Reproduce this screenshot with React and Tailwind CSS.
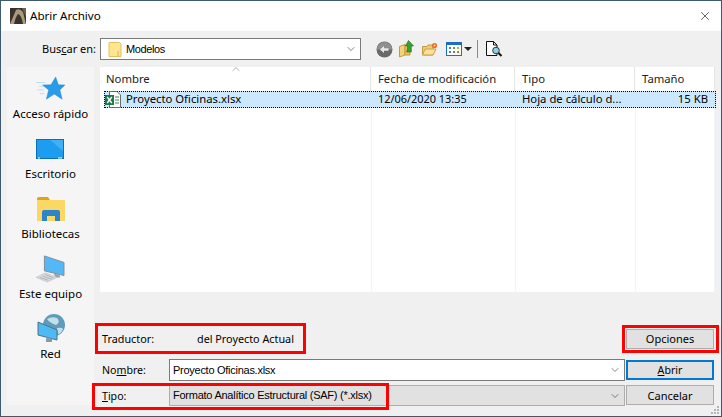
import React from "react";
import { X, ChevronDown, ChevronUp } from "lucide-react";

const FONT = { fontFamily: '"Noto Sans", "Open Sans", sans-serif' };
const COMBO_FONT = { fontFamily: '"Liberation Sans", Arial, sans-serif' };

function AppIcon() {
  return (
    <svg width="16" height="16" viewBox="0 0 16 16">
      <rect width="16" height="16" fill="#3a3128" />
      <path d="M0 16 L6 2 Q10 0 13 4 L16 16 L13 16 Q11 6 8 6 Q6 8 4 16Z" fill="#a89a80" />
      <path d="M12 0H16V9Z" fill="#6d6250" />
    </svg>
  );
}

function SmallFolder() {
  return (
    <svg width="14" height="17" viewBox="0 0 14 17">
      <path d="M1 1.5H11.5L13 3V15.5H1Z" fill="#fde68f" stroke="#e5c05c" />
      <path d="M10 10V15" stroke="#e0b64a" />
    </svg>
  );
}

function BackIcon() {
  return (
    <svg width="17" height="17" viewBox="0 0 17 17">
      <circle cx="8.5" cy="8.5" r="8" fill="#6a6a6a" />
      <path d="M1 8.5A7.5 7.5 0 0 1 16 8.5Z" fill="#8f8f8f" />
      <path d="M4 8.5L8 5V7.3H12.5V9.7H8V12Z" fill="#e8e8e8" />
    </svg>
  );
}

function UpFolderIcon() {
  return (
    <svg width="15" height="18" viewBox="0 0 15 18">
      <path d="M0.5 6.5L6 4.5V15L0.5 17Z" fill="#f3d27a" stroke="#c39a3d" />
      <path d="M6 5H11V15L6 15Z" fill="#e9c264" stroke="#c39a3d" />
      <path d="M9.5 0.5L14.5 6H12.3V12H7.7C8.3 9.8 8.7 8 8.7 6H6.5Z" fill="#36a12f" stroke="#17691a" strokeWidth="0.6" />
    </svg>
  );
}

function NewFolderIcon() {
  return (
    <svg width="16" height="14" viewBox="0 0 16 14">
      <path d="M0.5 4.5H5L6 3H11V13H0.5Z" fill="#eecb74" stroke="#c39a3d" />
      <path d="M3 7H14L11 13H0.5Z" fill="#f8e09a" stroke="#c9a24a" />
      <circle cx="12.5" cy="3.5" r="2.6" fill="#ef6a2c" />
      <circle cx="12.5" cy="3.5" r="1" fill="#ffd9a8" />
    </svg>
  );
}

function ViewsIcon() {
  return (
    <svg width="16" height="14" viewBox="0 0 16 14">
      <rect x="0.5" y="0.5" width="15" height="13" fill="#fff" stroke="#1a6fc4" />
      <rect x="0" y="0" width="16" height="3" fill="#1a6fc4" />
      <rect x="3" y="5" width="2" height="2" fill="#3d7fd0" />
      <rect x="7" y="5" width="2" height="2" fill="#5aa846" />
      <rect x="11" y="5" width="2" height="2" fill="#e0a030" />
      <rect x="3" y="9" width="2" height="2" fill="#3d7fd0" />
      <rect x="7" y="9" width="2" height="2" fill="#d0603a" />
      <rect x="11" y="9" width="2" height="2" fill="#5aa846" />
    </svg>
  );
}

function PreviewIcon() {
  return (
    <svg width="17" height="16" viewBox="0 0 17 16">
      <path d="M0.5 0.5H7.5L11 4V14.5H0.5Z" fill="#fff" stroke="#111" />
      <path d="M7.5 0.5V4H11" fill="none" stroke="#111" />
      <circle cx="10" cy="9.5" r="3.3" fill="#8fd0e8" stroke="#333" />
      <path d="M12.5 12L15.5 15" stroke="#111" strokeWidth="2" />
    </svg>
  );
}

function StarIcon() {
  return (
    <svg width="30" height="26" viewBox="0 0 32 28">
      <path d="M0 7H10M3 11H9M1 15H8M4 19H9" stroke="#b5dcf7" strokeWidth="1" />
      <path d="M21 1L24 9.5L31 9.7L25.6 15L28 25L19.5 19.5L11 25L13.5 15L7 9.7L16 9.5Z" fill="#2a9be8" stroke="#1f88d6" strokeWidth="0.5" />
    </svg>
  );
}

function DesktopIcon() {
  return (
    <svg width="28" height="20" viewBox="0 0 28 20">
      <rect x="0.5" y="0.5" width="27" height="19" fill="#1e9cf0" stroke="#0b6fb8" />
      <path d="M14 1H27V12Z" fill="#3db0f7" />
      <path d="M2 19H4M22 19H26" stroke="#fff" strokeWidth="1" />
    </svg>
  );
}

function LibrariesIcon() {
  return (
    <svg width="28" height="24" viewBox="0 0 28 24">
      <path d="M0 2Q0 0 2 0H11L13 3H0Z" fill="#dfa21e" />
      <rect x="0" y="3" width="28" height="21" fill="#fbd765" />
      <path d="M5 24V15Q5 13 7 13H21Q23 13 23 15V24H18V19H10V24Z" fill="#2a86c9" />
    </svg>
  );
}

function ComputerIcon() {
  return (
    <svg width="32" height="28" viewBox="0 0 32 30">
      <path d="M10 1L31 8V22L10 17Z" fill="#53b8f5" stroke="#7e8a93" />
      <path d="M20 20L22 24H27L26 21Z" fill="#9aa3a9" />
      <path d="M1 24L11 19L24 24L13 29Z" fill="#d7dadc" stroke="#b3b7ba" strokeWidth="0.5" />
      <path d="M5 24L14 27M8 22.5L18 26M11 21L20 24.5" stroke="#a5a9ac" strokeWidth="0.8" />
    </svg>
  );
}

function NetworkIcon() {
  return (
    <svg width="28" height="29" viewBox="0 0 28 29">
      <circle cx="17" cy="11" r="11" fill="#5f9cbc" />
      <path d="M10 5Q15 2 20 4Q24 8 19 11Q13 9 10 5ZM20 14Q25 13 26 15Q24 20 21 20Z" fill="#c5dfe9" />
      <path d="M1 8L20 16V26L1 21Z" fill="#4dbaf5" stroke="#51727f" />
      <path d="M9 25L11 23L15 25L15 28H9Z" fill="#8a9aa3" />
    </svg>
  );
}

function ExcelIcon() {
  return (
    <svg width="16" height="17" viewBox="0 0 16 17">
      <path d="M4.5 0.5H12L15.5 4V16.5H4.5Z" fill="#fff" stroke="#6b6b6b" />
      <path d="M10 6H14M10 9H14M10 12H14" stroke="#2f8f5b" />
      <rect x="0" y="4" width="9" height="10" fill="#1d7a44" />
      <path d="M2.2 6L6.8 12M6.8 6L2.2 12" stroke="#fff" strokeWidth="1.4" />
    </svg>
  );
}

function PlaceItem({ icon, label, className, iconClass }) {
  return (
    <div className={`flex flex-col items-center justify-end ${className}`}>
      <div className={iconClass}>{icon}</div>
      <div className="h-[20px] leading-[20px] text-[11.5px] text-black whitespace-nowrap">{label}</div>
    </div>
  );
}

function HeaderCell({ label, className }) {
  return (
    <div className={`h-full flex items-center border-r border-[#e5e5e5] ${className}`}>
      {label}
    </div>
  );
}

function RowCell({ children, className }) {
  return <div className={`h-full flex items-center ${className}`}>{children}</div>;
}

export default function App() {
  return (
    <div style={FONT} className="w-[722px] h-[417px] border border-[#3d5a73] bg-[#f0f0f0] text-[11.3px] text-black flex flex-col relative overflow-hidden">
      {/* barra de titulo */}
      <div className="h-[30px] bg-white flex items-center pl-[9px] shrink-0">
        <AppIcon />
        <span className="ml-[4px] text-[11.6px]">Abrir Archivo</span>
        <X className="ml-auto mr-[9px] w-[14px] h-[14px]" strokeWidth={1.2} color="#222" />
      </div>

      {/* buscar en */}
      <div className="h-[36px] shrink-0 flex items-center pl-[41px]">
        <span className="w-[58px] whitespace-nowrap text-[11px]">
          Bus<span className="underline">c</span>ar en:
        </span>
        <div className="w-[261px] h-[22px] bg-white border border-[#7a7a7a] flex items-center pl-[7px] pr-[3px]">
          <SmallFolder />
          <span style={COMBO_FONT} className="ml-[4px] text-[11px] tracking-[-0.4px]">Modelos</span>
          <ChevronDown className="ml-auto w-[12px] h-[12px]" strokeWidth={1.2} color="#333" />
        </div>
        <div className="ml-[15px] flex items-center">
          <BackIcon />
          <div className="ml-[6px]"><UpFolderIcon /></div>
          <div className="ml-[8px]"><NewFolderIcon /></div>
          <div className="ml-[8px]"><ViewsIcon /></div>
          <div className="ml-[2px] w-0 h-0 border-x-[4px] border-x-transparent border-t-[4px] border-t-[#222]" />
          <div className="ml-[5px] w-px h-[18px] bg-[#8a8a8a]" />
          <div className="ml-[8px]"><PreviewIcon /></div>
        </div>
      </div>

      <div className="flex flex-1 min-h-0 pl-[6px]">
        {/* lugares */}
        <div className="w-[87px] h-[338px] bg-[#f5f5f5] flex flex-col items-center shrink-0">
          <PlaceItem icon={<StarIcon />} label="Acceso rápido" className="h-[57px]" iconClass="mb-[2px]" />
          <PlaceItem icon={<DesktopIcon />} label="Escritorio" className="h-[60px]" iconClass="mb-[5px]" />
          <PlaceItem icon={<LibrariesIcon />} label="Bibliotecas" className="h-[60px]" iconClass="mb-[3px]" />
          <PlaceItem icon={<ComputerIcon />} label="Este equipo" className="h-[60px]" iconClass="mb-[1px]" />
          <PlaceItem icon={<NetworkIcon />} label="Red" className="h-[60px]" iconClass="mb-[1px]" />
        </div>

        <div className="ml-[6px] w-[615px] flex flex-col">
          {/* lista */}
          <div className="h-[225px] w-[615px] bg-white relative shrink-0">
            <ChevronUp className="absolute left-[130px] top-[-4px] w-[12px] h-[12px]" strokeWidth={1.2} color="#777" />
            <div className="h-[24px] flex items-center text-[#222]">
              <HeaderCell label="Nombre" className="w-[271px] pl-[6px]" />
              <HeaderCell label="Fecha de modificación" className="w-[144px] pl-[7px]" />
              <HeaderCell label="Tipo" className="w-[120px] pl-[7px]" />
              <HeaderCell label="Tamaño" className="w-[80px] pl-[7px]" />
            </div>
            <div className="ml-[4px] h-[17px] w-[612px] bg-[#cce8ff] border border-dotted border-black flex items-center">
              <RowCell className="w-[266px]">
                <ExcelIcon />
                <span className="ml-[5px]">Proyecto Oficinas.xlsx</span>
              </RowCell>
              <RowCell className="w-[144px] pl-[7px] text-[10.9px]">12/06/2020 13:35</RowCell>
              <RowCell className="w-[120px] pl-[7px]">Hoja de cálculo d...</RowCell>
              <RowCell className="w-[79px] justify-end pr-[6px]">15 KB</RowCell>
            </div>
            <div className="absolute left-[271px] top-[41px] bottom-0 w-px bg-[#eef6fd]" />
            <div className="absolute left-[415px] top-[41px] bottom-0 w-px bg-[#eef6fd]" />
            <div className="absolute left-[535px] top-[41px] bottom-0 w-px bg-[#eef6fd]" />
            <div className="absolute left-[614px] top-[41px] bottom-0 w-px bg-[#eef6fd]" />
          </div>

          {/* traductor */}
          <div className="h-[37px] mt-[30px] flex items-start shrink-0">
            <div className="flex items-center h-[20px] pl-[2px] mt-[7px] text-[10.8px]">
              <span className="w-[95px]">Traductor:</span>
              <span>del Proyecto Actual</span>
            </div>
            <button className="ml-auto mr-[1px] mt-[7px] w-[88px] h-[20px] bg-[#e1e1e1] border border-[#adadad] text-center text-[11px]">
              Opciones
            </button>
          </div>

          {/* nombre */}
          <div className="h-[26px] flex items-start shrink-0">
            <span className="w-[69px] pl-[2px] leading-[22px] text-[10.6px]">
              No<span className="underline">m</span>bre:
            </span>
            <div className="w-[456px] h-[22px] bg-white border border-[#7a7a7a] flex items-center pl-[3px] pr-[3px]">
              <span style={COMBO_FONT} className="text-[11px] tracking-[-0.27px]">Proyecto Oficinas.xlsx</span>
              <ChevronDown className="ml-auto w-[12px] h-[12px]" strokeWidth={1.2} color="#333" />
            </div>
            <button className="ml-[1px] mt-px w-[88px] h-[20px] bg-[#e1e1e1] border-2 border-[#0078d7] text-center leading-none text-[10.6px]">
              <span className="underline">A</span>brir
            </button>
          </div>

          {/* tipo */}
          <div className="h-[22px] flex items-start shrink-0">
            <span className="w-[69px] pl-[2px] leading-[22px] text-[10.6px]">
              <span className="underline">T</span>ipo:
            </span>
            <div className="w-[456px] h-[21px] bg-[#e1e1e1] border border-[#adadad] flex items-center pl-[3px] pr-[3px]">
              <span style={COMBO_FONT} className="text-[11px] tracking-[-0.25px]">Formato Analítico Estructural (SAF) (*.xlsx)</span>
              <ChevronDown className="ml-auto w-[12px] h-[12px]" strokeWidth={1.2} color="#333" />
            </div>
            <button className="ml-[1px] w-[88px] h-[20px] bg-[#e1e1e1] border border-[#adadad] text-center leading-none text-[11px]">
              Cancelar
            </button>
          </div>
        </div>
      </div>

      {/* recuadros rojos sobre la captura */}
      <div className="absolute left-[94px] top-[322px] w-[211px] h-[31px] border-[3px] border-[#ff0000] pointer-events-none" />
      <div className="absolute left-[621px] top-[324px] w-[97px] h-[28px] border-[3px] border-[#ff0000] pointer-events-none" />
      <div className="absolute left-[91px] top-[382px] w-[297px] h-[27px] border-[3px] border-[#ff0000] pointer-events-none" />

      {/* grip */}
      <div className="absolute right-[2px] bottom-[2px] grid grid-cols-3 gap-px">
        <span className="w-[2px] h-[2px]" />
        <span className="w-[2px] h-[2px]" />
        <span className="w-[2px] h-[2px] bg-[#b5b5b5]" />
        <span className="w-[2px] h-[2px]" />
        <span className="w-[2px] h-[2px] bg-[#b5b5b5]" />
        <span className="w-[2px] h-[2px] bg-[#b5b5b5]" />
        <span className="w-[2px] h-[2px] bg-[#b5b5b5]" />
        <span className="w-[2px] h-[2px] bg-[#b5b5b5]" />
        <span className="w-[2px] h-[2px] bg-[#b5b5b5]" />
      </div>
    </div>
  );
}
